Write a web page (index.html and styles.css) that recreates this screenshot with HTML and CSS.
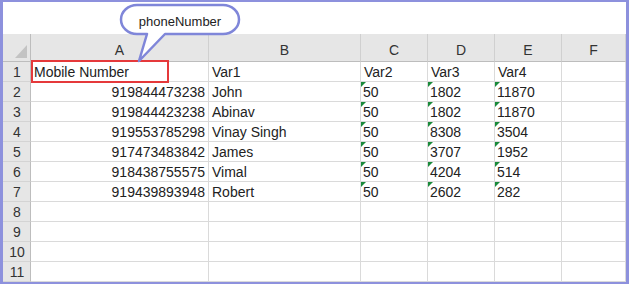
FILE: index.html
```html
<!DOCTYPE html>
<html lang="en">

<head>
    <meta charset="UTF-8">
    <meta name="viewport" content="width=device-width, initial-scale=1.0">
    <title>Mobile numbers sheet</title>
    <link rel="stylesheet" href="styles.css">
</head>

<body>
    <div class="frame">
        <div class="topbar"></div>

        <div class="sheet">
            <div class="hd corner"><span class="tri"></span></div>
            <div class="hd">A</div>
            <div class="hd">B</div>
            <div class="hd">C</div>
            <div class="hd">D</div>
            <div class="hd">E</div>
            <div class="hd">F</div>

            <div class="rn">1</div>
            <div class="c">Mobile Number</div>
            <div class="c">Var1</div>
            <div class="c">Var2</div>
            <div class="c">Var3</div>
            <div class="c">Var4</div>
            <div class="c"></div>

            <div class="rn">2</div>
            <div class="c num">919844473238</div>
            <div class="c">John</div>
            <div class="c flag">50</div>
            <div class="c flag">1802</div>
            <div class="c flag">11870</div>
            <div class="c"></div>

            <div class="rn">3</div>
            <div class="c num">919844423238</div>
            <div class="c">Abinav</div>
            <div class="c flag">50</div>
            <div class="c flag">1802</div>
            <div class="c flag">11870</div>
            <div class="c"></div>

            <div class="rn">4</div>
            <div class="c num">919553785298</div>
            <div class="c">Vinay Singh</div>
            <div class="c flag">50</div>
            <div class="c flag">8308</div>
            <div class="c flag">3504</div>
            <div class="c"></div>

            <div class="rn">5</div>
            <div class="c num">917473483842</div>
            <div class="c">James</div>
            <div class="c flag">50</div>
            <div class="c flag">3707</div>
            <div class="c flag">1952</div>
            <div class="c"></div>

            <div class="rn">6</div>
            <div class="c num">918438755575</div>
            <div class="c">Vimal</div>
            <div class="c flag">50</div>
            <div class="c flag">4204</div>
            <div class="c flag">514</div>
            <div class="c"></div>

            <div class="rn">7</div>
            <div class="c num">919439893948</div>
            <div class="c">Robert</div>
            <div class="c flag">50</div>
            <div class="c flag">2602</div>
            <div class="c flag">282</div>
            <div class="c"></div>

            <div class="rn">8</div>
            <div class="c"></div><div class="c"></div><div class="c"></div><div class="c"></div><div class="c"></div><div class="c"></div>
            <div class="rn">9</div>
            <div class="c"></div><div class="c"></div><div class="c"></div><div class="c"></div><div class="c"></div><div class="c"></div>
            <div class="rn">10</div>
            <div class="c"></div><div class="c"></div><div class="c"></div><div class="c"></div><div class="c"></div><div class="c"></div>
            <div class="rn">11</div>
            <div class="c"></div><div class="c"></div><div class="c"></div><div class="c"></div><div class="c"></div><div class="c"></div>
        </div>

        <!-- annotations on top of the sheet -->
        <div class="mark"></div>
        <div class="callout">
            <svg width="124" height="62" viewBox="0 0 124 62">
                <path d="M19 3 H105 A16 14.5 0 0 1 105 32 H47 L21 59 L29 32 H19 A16 14.5 0 0 1 19 3 Z"
                    fill="#fff" stroke="#7f86d9" stroke-width="2.5" stroke-linejoin="round" />
            </svg>
            <span class="label">phoneNumber</span>
        </div>
    </div>
</body>

</html>
```

FILE: styles.css
```css
body {
    margin: 0;
    background: #fff;
    font-family: "Liberation Sans", Arial, sans-serif;
    font-size: 14px;
    color: #222;
}

.frame {
    position: relative;
    width: 629px;
    height: 284px;
    box-sizing: border-box;
    border: 2px solid #8d91dd;
    border-left-width: 3px;
    border-right-width: 3px;
    overflow: hidden;
    background: #fff;
}

.topbar {
    height: 32px;
}

.sheet {
    display: grid;
    grid-template-columns: 28px 178px 152px 67px 67px 67px 1fr;
    grid-template-rows: 28px repeat(11, 20px);
}

.hd {
    background: #e6e6e6;
    border-right: 1px solid #d0d0d0;
    border-bottom: 1px solid #bdbdbd;
    box-sizing: border-box;
    display: flex;
    align-items: flex-end;
    justify-content: center;
    padding-bottom: 3px;
    color: #333;
    line-height: 16px;
}

.hd:last-child {
    border-right: 0;
}

.corner {
    position: relative;
    border-right-color: #bdbdbd;
}

.corner .tri {
    position: absolute;
    left: 12px;
    top: 11px;
    width: 12px;
    height: 13px;
    background: #c3c3c3;
    clip-path: polygon(100% 0, 100% 100%, 0 100%);
}

.rn {
    background: #e6e6e6;
    border-right: 1px solid #bdbdbd;
    border-bottom: 1px solid #d4d4d4;
    box-sizing: border-box;
    text-align: center;
    line-height: 20px;
    color: #333;
    padding-left: 1px;
}

.c {
    position: relative;
    border-right: 1px solid #dadada;
    border-bottom: 1px solid #dadada;
    box-sizing: border-box;
    line-height: 20px;
    padding: 0 3px;
    white-space: nowrap;
    overflow: hidden;
}

.c.num {
    text-align: right;
}

.c.flag {
    padding-left: 2px;
}

.c.flag::before {
    content: "";
    position: absolute;
    left: 0;
    top: 0;
    border-top: 5px solid #1a8a3a;
    border-right: 5px solid transparent;
}

.mark {
    position: absolute;
    left: 28px;
    top: 58px;
    width: 138px;
    height: 23px;
    box-sizing: border-box;
    border: 2px solid #e5393b;
}

.callout {
    position: absolute;
    left: 115px;
    top: 0;
    width: 124px;
    height: 62px;
}

.callout svg {
    display: block;
}

.callout .label {
    position: absolute;
    left: 3px;
    top: 5px;
    width: 118px;
    height: 28px;
    display: flex;
    align-items: center;
    justify-content: center;
    font-size: 13px;
    color: #222;
}
```
